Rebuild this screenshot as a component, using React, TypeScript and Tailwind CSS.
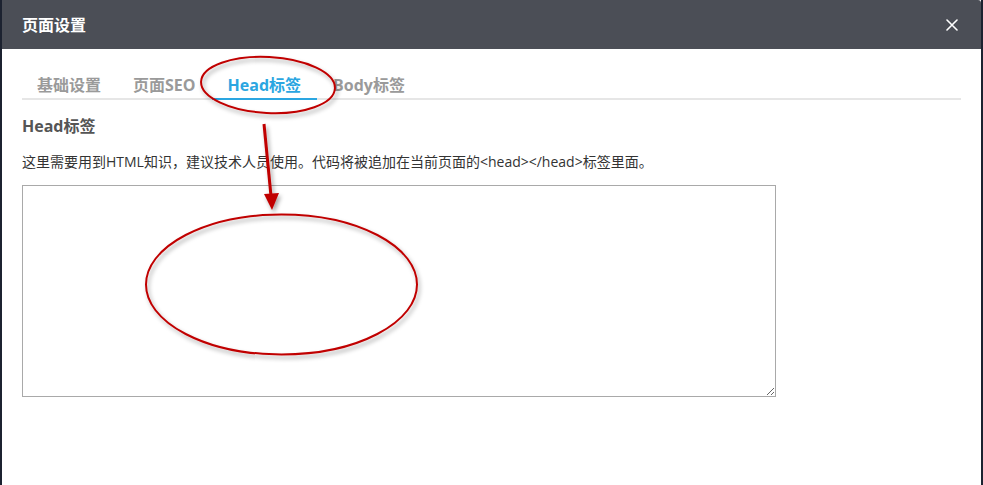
import { useState } from 'react';

const tabs = ['基础设置', '页面SEO', 'Head标签', 'Body标签'];

const font = { fontFamily: '"Open Sans", "Noto Sans CJK SC", sans-serif' };

const Annotations = () => (
  <svg className="pointer-events-none absolute inset-0" width="983" height="485" viewBox="0 0 983 485">
    <defs>
      <filter id="sh" x="-20%" y="-20%" width="140%" height="140%">
        <feDropShadow dx="2" dy="3" stdDeviation="2" floodColor="#000" floodOpacity="0.35" />
      </filter>
    </defs>
    <g filter="url(#sh)" fill="none" stroke="#c00000">
      <ellipse cx="268" cy="85" rx="67" ry="28" strokeWidth="2" transform="rotate(3 268 85)" />
      <line x1="264" y1="124" x2="271" y2="196" strokeWidth="3" />
      <polygon points="264,194 279,193 272,210" fill="#c00000" stroke="none" />
      <ellipse cx="281.5" cy="284.5" rx="135.5" ry="70" strokeWidth="2" />
    </g>
  </svg>
);

export default function App() {
  const [active, setActive] = useState(2);
  const [code, setCode] = useState('');

  return (
    <div className="relative h-[485px] w-[983px] overflow-hidden bg-[#1c2230]" style={font}>
      <div className="ml-[2px] flex h-full w-[979px] flex-col bg-white">
        <div className="flex h-[49px] items-center justify-between rounded-tr-[3px] bg-[#4b4e56] pl-[20px] pr-[22px]">
          <h1 className="text-[16px] font-bold leading-none text-white">页面设置</h1>
          <button className="flex h-[14px] w-[14px] items-center justify-center">
            <svg width="12" height="12" viewBox="0 0 12 12" stroke="#fff" strokeWidth="1.6" strokeLinecap="round">
              <path d="M1 1L11 11M11 1L1 11" />
            </svg>
          </button>
        </div>

        <div className="px-[20px] pt-[24px]">
          <div className="flex border-b-2 border-[#e6e6e6]">
            {tabs.map((t, i) => (
              <button
                key={t}
                onClick={() => setActive(i)}
                className={`-mb-[2px] px-[16px] pb-[1px] text-[16px] font-bold leading-[24px] border-b-2 ${
                  i === active ? 'border-[#2ba6e1] text-[#2ba6e1]' : 'border-transparent text-[#9a9a9a]'
                } ${i === 0 ? '-ml-px' : ''}`}
              >
                {t}
              </button>
            ))}
          </div>

          <h2 className="mt-[14px] text-[16px] font-bold leading-[24px] text-[#555]">Head标签</h2>
          <p className="mt-[14px] text-[14px] leading-[20px] text-[#333]">
            这里需要用到HTML知识，建议技术人员使用。代码将被追加在当前页面的&lt;head&gt;&lt;/head&gt;标签里面。
          </p>
          <textarea
            value={code}
            onChange={(e) => setCode(e.target.value)}
            className="mt-[13px] block h-[212px] w-[754px] border border-[#a9a9a9] p-1 text-[13px] outline-none"
          />
        </div>
      </div>
      <Annotations />
    </div>
  );
}
